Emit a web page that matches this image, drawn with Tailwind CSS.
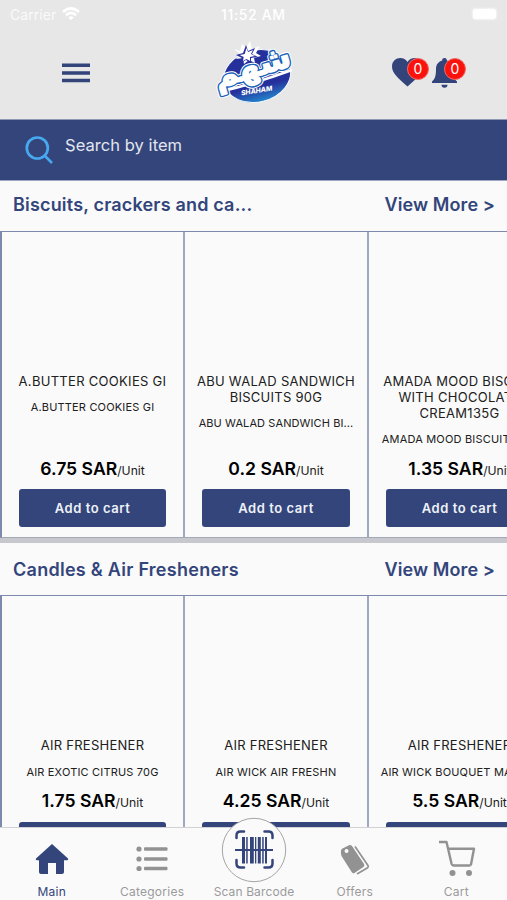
<!DOCTYPE html>
<html lang="en">
<head>
<meta charset="utf-8">
<title>Shaham</title>
<script src="https://cdn.jsdelivr.net/npm/@tailwindcss/browser@4"></script>
</head>
<body class="font-['Inter',sans-serif] bg-[#fafafa]">
<div class="w-[507px] h-[900px] overflow-hidden flex flex-col bg-[#fafafa] relative">
  <header class="h-[120px] shrink-0 bg-[#e7e7e7] border-b border-[#8f97b3] flex flex-col">
    <div class="h-7 px-[10px] flex items-center justify-between text-white text-[14px] relative">
      <div class="flex items-center gap-[6px]"><span class="tracking-[0.05px] opacity-80">Carrier</span>
        <svg width="18" height="14" viewBox="0 0 18 14" fill="none" stroke="#fff" stroke-width="2.7"><path d="M1 5Q9-2 17 5M4 8.300Q9 3.500 14 8.300"/><path d="M6.300 10.500Q9 8 11.700 10.500L9 13.300Z" fill="#fff" stroke="none"/></svg>
      </div>
      <span class="absolute left-[221px] font-medium text-[14px] tracking-[0.65px] whitespace-nowrap">11:52 AM</span>
      <span class="w-[23px] h-[10px] rounded-[3px] bg-white mr-[1px] shadow-[0_0_2px_1px_#ffffff90]"></span>
    </div>
    <div class="h-[90px] relative flex items-center">
      <svg class="ml-[62px] mb-[1px]" width="28" height="20" fill="#33447a"><path d="M0 .5h28v3.500H0zM0 8.200h28v3.500H0zM0 15.800h28v3.500H0z"/></svg>
      <svg class="ml-[124px] overflow-visible" width="82" height="66" viewBox="0 0 82 66">
        <defs><linearGradient id="g" x1="0" y1="0" x2="0" y2="1"><stop offset=".7" stop-color="#26309b"/><stop offset="1" stop-color="#2385cc"/></linearGradient></defs>
        <ellipse cx="43" cy="36" rx="34" ry="26" transform="rotate(-14 43 36)" fill="url(#g)" stroke="#f5f8ff" stroke-width="1"/>
        <path d="M5 52Q40 44 78 30" fill="none" stroke="#fff" stroke-width="2.500"/>
        <g font-family="DejaVu Sans" font-weight="700" font-size="32" text-anchor="middle" transform="translate(41 37) rotate(-17) scale(1.02 1)" stroke-linejoin="round">
          <text fill="#fff" stroke="#fff" stroke-width="6">شهم</text>
          <text fill="#1d62b8" stroke="#1d62b8" stroke-width="4">شهم</text>
          <text fill="#fff" stroke="#fff" stroke-width="1.200">شهم</text>
        </g>
        <path d="M20 9l6 2 2-7 4 4 4-7 2 8 8-3-4 7 5 3-7 2 1 5-6-3-5 4-1-6-7 1 4-5z" fill="#fff"/>
        <path d="M32 5l2 6 7-3-3 6 6 3-7 1 0 5-5-3-5 3 1-5-6-3 7-2z" fill="#2731a0"/>
        <path d="M32.500 8l1.500 4 5-2-2 4 4 2-5 1 0 4-3.500-2-3.500 2 .7-4-4-2 5-1z" fill="#fff"/>
        <text transform="translate(43 53) rotate(-9)" text-anchor="middle" font-family="Inter" font-weight="800" font-style="italic" font-size="6.800" fill="#fff">SHAHAM</text>
      </svg>
      <svg class="absolute left-[392px] top-[30px]" width="31" height="29" viewBox="0 0 31 29" fill="#33447a"><path d="M15.500 28.500C6 20 0 15 0 8.500 0 3 4 0 8.300 0c3 0 5.700 1.500 7.200 4C17 1.500 19.700 0 22.700 0 27 0 31 3 31 8.500c0 6.500-6 11.500-15.500 20z"/></svg>
      <svg class="absolute left-[432px] top-[29px]" width="25" height="32" viewBox="0 0 25 32" fill="#33447a"><path d="M12.500 1a2.300 2.300 0 0 1 2.300 2.500C19 4.700 21 8 21 12c0 7 1 10 4 12.500V26H0v-1.500C3 22 4 19 4 12c0-4 2-7.300 6.200-8.500A2.300 2.300 0 0 1 12.500 1zM9.500 27.700h6a3 3 0 0 1-6 0z"/></svg>
      <span class="absolute left-[407px] top-[30px] size-[22px] rounded-full bg-[#fb120d] border border-[#ee6c68] text-white text-[14px] leading-5 text-center">0</span>
      <span class="absolute left-[444px] top-[30px] size-[22px] rounded-full bg-[#fb120d] border border-[#ee6c68] text-white text-[14px] leading-5 text-center">0</span>
    </div>
  </header>
  <div class="h-[61px] shrink-0 bg-[#33457b] border-b border-[#9da5c0] flex pl-[25px] text-[#e3e6ef]">
    <svg class="mt-4" width="28" height="28" viewBox="0 0 28 28" fill="none" stroke="#48a8ef" stroke-width="2.700"><circle cx="12.300" cy="12" r="10.500"/><path d="M19.500 19.500L27 27"/></svg>
    <span class="ml-3 mt-[13px] text-[16.500px] leading-6 tracking-[0.05px]">Search by item</span>
  </div>
  <section class="shrink-0 h-[362px] border-b-[5px] border-[#c7c8ce] flex flex-col">
    <div class="h-[50px] shrink-0 flex items-center justify-between pl-[13px] pr-[12px] pb-[3px] text-[#33457b] text-[18px] font-semibold"><h2 class="tracking-[0.18px]">Biscuits, crackers and ca...</h2><a class="tracking-[0.1px]">View More &gt;</a></div>
    <div class="flex-1 w-[552px] flex border-t border-b border-l-2 border-[#7f89ac] border-b-[#a3a7b8]">
      <article class="w-[183px] shrink-0 border-r-2 border-[#a0a7c1] px-[17px] pt-[141px] pb-[4px] flex flex-col text-center text-[#202020]">
        <h3 class="-mx-2 text-[13px] leading-4 tracking-[0.3px] whitespace-nowrap">A.BUTTER COOKIES GI</h3>
        <p class="mt-[10px] text-[11px] leading-4 tracking-[0.18px] whitespace-nowrap">A.BUTTER COOKIES GI</p>
        <p class="mt-auto leading-[22px] text-[12.200px] whitespace-nowrap"><b class="text-[17.600px] font-semibold text-black">6.75 SAR</b>/Unit</p>
        <button class="mt-[7px] mb-[6px] h-[38px] shrink-0 rounded-[3px] bg-[#33457b] text-[#eef1f8] font-semibold text-[13px] tracking-[0.55px] pt-[2px]">Add to cart</button>
      </article>
      <article class="w-[184px] shrink-0 border-r-2 border-[#a0a7c1] px-[17px] pt-[141px] pb-[4px] flex flex-col text-center text-[#202020]">
        <h3 class="-mx-2 text-[13px] leading-4 tracking-[0.27px] whitespace-nowrap">ABU WALAD SANDWICH<br>BISCUITS 90G</h3>
        <p class="-mx-4 mt-[10px] text-[11px] leading-4 tracking-[0.1px] whitespace-nowrap">ABU WALAD SANDWICH BI...</p>
        <p class="mt-auto leading-[22px] text-[12.200px] whitespace-nowrap"><b class="text-[17.600px] font-semibold text-black">0.2 SAR</b>/Unit</p>
        <button class="mt-[7px] mb-[6px] h-[38px] shrink-0 rounded-[3px] bg-[#33457b] text-[#eef1f8] font-semibold text-[13px] tracking-[0.55px] pt-[2px]">Add to cart</button>
      </article>
      <article class="w-[181px] shrink-0 px-[17px] pt-[141px] pb-[4px] flex flex-col text-center text-[#202020]">
        <h3 class="-mx-2 text-[13px] leading-4 tracking-[0.3px] whitespace-nowrap">AMADA MOOD BISCUIT<br>WITH CHOCOLATE<br>CREAM135G</h3>
        <p class="-mx-4 mt-[10px] text-[11px] leading-4 tracking-[0.18px] whitespace-nowrap">AMADA MOOD BISCUIT WI...</p>
        <p class="mt-auto leading-[22px] text-[12.200px] whitespace-nowrap"><b class="text-[17.600px] font-semibold text-black">1.35 SAR</b>/Unit</p>
        <button class="mt-[7px] mb-[6px] h-[38px] shrink-0 rounded-[3px] bg-[#33457b] text-[#eef1f8] font-semibold text-[13px] tracking-[0.55px] pt-[2px]">Add to cart</button>
      </article>
    </div>
  </section>
  <section class="flex-1 min-h-0 overflow-hidden flex flex-col">
    <div class="h-[52px] shrink-0 flex items-center justify-between pl-[13px] pr-[12px] text-[#33457b] text-[18px] font-semibold"><h2 class="tracking-[0.27px]">Candles &amp; Air Fresheners</h2><a class="tracking-[0.1px]">View More &gt;</a></div>
    <div class="h-[300px] shrink-0 w-[552px] flex border-t border-l-2 border-[#7f89ac]">
      <article class="w-[183px] shrink-0 border-r-2 border-[#a0a7c1] px-[17px] pt-[141px] flex flex-col text-center text-[#202020]">
        <h3 class="text-[13px] leading-4 tracking-[0.27px] whitespace-nowrap">AIR FRESHENER</h3>
        <p class="mt-[11px] text-[11px] leading-4 tracking-[0.18px] whitespace-nowrap">AIR EXOTIC CITRUS 70G</p>
        <p class="mt-[10px] leading-[22px] text-[12.200px] whitespace-nowrap"><b class="text-[17.600px] font-semibold text-black">1.75 SAR</b>/Unit</p>
        <button class="mt-[8px] h-[38px] shrink-0 rounded-[3px] bg-[#33457b] text-[#eef1f8] font-semibold text-[13px]">Add to cart</button>
      </article>
      <article class="w-[184px] shrink-0 border-r-2 border-[#a0a7c1] px-[17px] pt-[141px] flex flex-col text-center text-[#202020]">
        <h3 class="text-[13px] leading-4 tracking-[0.27px] whitespace-nowrap">AIR FRESHENER</h3>
        <p class="mt-[11px] text-[11px] leading-4 tracking-[0.18px] whitespace-nowrap">AIR WICK AIR FRESHN</p>
        <p class="mt-[10px] leading-[22px] text-[12.200px] whitespace-nowrap"><b class="text-[17.600px] font-semibold text-black">4.25 SAR</b>/Unit</p>
        <button class="mt-[8px] h-[38px] shrink-0 rounded-[3px] bg-[#33457b] text-[#eef1f8] font-semibold text-[13px]">Add to cart</button>
      </article>
      <article class="w-[181px] shrink-0 px-[17px] pt-[141px] flex flex-col text-center text-[#202020]">
        <h3 class="text-[13px] leading-4 tracking-[0.27px] whitespace-nowrap">AIR FRESHENER</h3>
        <p class="-mx-4 mt-[11px] text-[11px] leading-4 tracking-[0.18px] whitespace-nowrap">AIR WICK BOUQUET MAGN...</p>
        <p class="mt-[10px] leading-[22px] text-[12.200px] whitespace-nowrap"><b class="text-[17.600px] font-semibold text-black">5.5 SAR</b>/Unit</p>
        <button class="mt-[8px] h-[38px] shrink-0 rounded-[3px] bg-[#33457b] text-[#eef1f8] font-semibold text-[13px]">Add to cart</button>
      </article>
    </div>
  </section>
  <nav class="h-[73px] shrink-0 relative bg-[#fafafa] border-t border-[#d2d2d4] grid grid-cols-5 text-[12px] text-[#9a9a9c] tracking-[0.25px] text-center">
    <a class="flex flex-col items-center justify-end text-[#33457b]">
      <svg class="mb-[9px] ml-[2px]" width="34" height="31" viewBox="0 0 34 31" fill="#33457b"><path d="M17 0L1 14.500q-.8 1.500.8 1.700H4V28q0 2 2 2h7V19h8v11h6q2 0 2-2V16.200h3.200q1.600-.2.8-1.700z"/></svg><span class="leading-4 ml-[2px]">Main</span></a>
    <a class="flex flex-col items-center justify-end">
      <svg class="mb-[12px]" width="32" height="26" viewBox="0 0 32 26" fill="#929292"><circle cx="3" cy="3" r="2.600"/><circle cx="3" cy="13" r="2.600"/><circle cx="3" cy="22.500" r="2.600"/><rect x="8" y="1.300" width="23.500" height="3.500" rx="1"/><rect x="8" y="11.200" width="23.500" height="3.500" rx="1"/><rect x="8" y="20.800" width="23.500" height="3.500" rx="1"/></svg><span class="leading-4">Categories</span></a>
    <a class="flex flex-col items-center justify-end"><span class="leading-4 whitespace-nowrap tracking-[0.12px] ml-px">Scan Barcode</span></a>
    <a class="flex flex-col items-center justify-end">
      <svg class="mb-[8px]" width="30" height="32" viewBox="0 0 30 32"><path fill="#929292" fill-rule="evenodd" d="M2.500 4.500L9 1.300q1.800-.6 3 .8L24 20q1 1.800-.6 3L14.500 29q-1.600.9-2.700-.7L1.500 12Q.5 9.500 1 6.500q.3-1.500 1.500-2zM6.500 5a2 2 0 1 0 .1 4 2 2 0 0 0-.1-4z"/><path d="M15 2.500L28 21.500q.8 1.300-.4 2.200L17 30" fill="none" stroke="#929292" stroke-width="1.700"/></svg><span class="leading-4">Offers</span></a>
    <a class="flex flex-col items-center justify-end">
      <svg class="mb-[8px] ml-[1px]" width="38" height="36" viewBox="0 0 38 36" fill="none" stroke="#929292" stroke-width="2.400" stroke-linejoin="round"><path d="M1 2h7.500L13.500 23.500q.6 2 2.500 2h16.500M10 8.800h26L32.800 25.500"/><g fill="#929292" stroke="none"><circle cx="14.500" cy="33" r="3"/><circle cx="31" cy="33" r="3"/></g></svg><span class="leading-4">Cart</span></a>
    <svg class="absolute left-[221px] top-[-11px]" width="66" height="66" viewBox="0 0 66 66" fill="none"><circle cx="33" cy="33" r="31.700" fill="#fafafa" stroke="#a5a5a7"/><g stroke="#33457b" stroke-width="2.500" stroke-linecap="round"><path d="M15.500 21v-2.500q0-4 4-4H23M43.500 14.500h4q4 0 4 4V21M15.500 43v3.500q0 4 4 4H23M43.500 50.500h4q4 0 4-4V43"/></g><path fill="#33457b" d="M21 20h3v26.500h-3zM25.200 20h1.500v26.500h-1.500zM29 20h3.800v26.500H29zM34 20h1.300v26.500H34zM36.800 20h3v26.500h-3zM41.200 20h1.500v26.500h-1.500zM44 20h2v26.500h-2zM14 32h38v2H14z"/></svg>
  </nav>
</div>
</body>
</html>
